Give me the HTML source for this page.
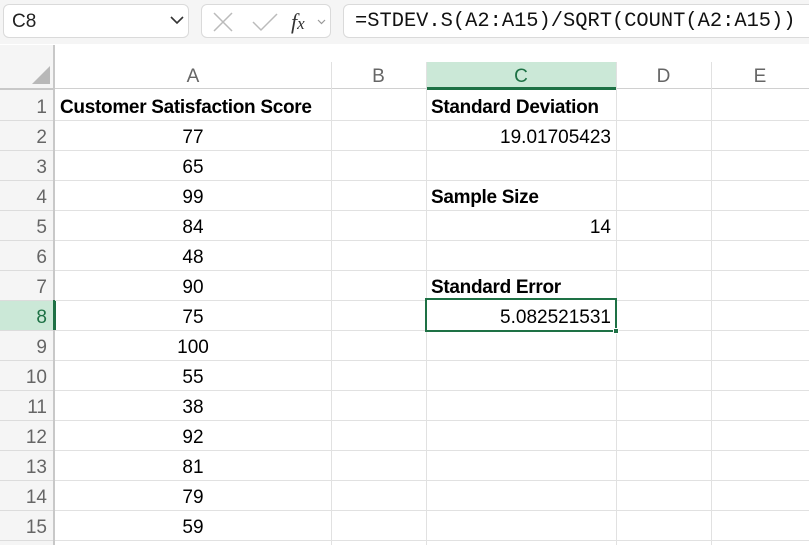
<!DOCTYPE html>
<html><head><style>
*{margin:0;padding:0;box-sizing:border-box}
body{width:809px;height:545px;overflow:hidden;background:#fff;font-family:"Liberation Sans",Arial,sans-serif;position:relative}
.a{position:absolute}
.bar{left:0;top:0;width:809px;height:44px;background:#f5f5f5}
.box{background:#fff;border:1px solid #dadada;border-radius:6px;height:34px;top:4px}
.t{position:absolute;font-size:19px;color:#000;line-height:30px;white-space:nowrap;margin-top:2px}
.b{font-weight:bold;letter-spacing:-0.3px}
.rh{position:absolute;left:0;width:53px;text-align:right;padding-right:6px;font-size:19px;color:#666;line-height:30px;margin-top:2px}
.hl{position:absolute;height:1px;background:#e1e1e1;left:55px;width:754px}
.vl{position:absolute;width:1px;background:#e1e1e1;top:62px;height:483px}
.ch{position:absolute;top:63px;height:27px;text-align:center;font-size:19px;color:#666;line-height:28px}
.n{left:55px;width:276px;text-align:center}
</style></head><body>
<div class="a bar"></div>
<div class="a box" style="left:3px;width:186px"></div>
<div class="t" style="left:12px;top:5px;font-size:19px;color:#222">C8</div>
<svg class="a" style="left:170px;top:16px" width="14" height="9"><path d="M1 1 L7 7 L13 1" fill="none" stroke="#333" stroke-width="1.6"/></svg>
<div class="a box" style="left:201px;width:130px"></div>
<svg class="a" style="left:213px;top:12px" width="20" height="20"><path d="M1 1L19 19M19 1L1 19" stroke="#bbb" stroke-width="1.5"/></svg>
<svg class="a" style="left:252px;top:12px" width="26" height="20"><path d="M1 10L9 18L25 2" fill="none" stroke="#bbb" stroke-width="1.5"/></svg>
<div class="t" style="left:291px;top:5px;font-family:'Liberation Serif',serif;font-style:italic;font-size:22px;color:#333">f<span style="font-size:17px">x</span></div>
<svg class="a" style="left:317px;top:19px" width="9" height="6"><path d="M1 1L4.5 4.5L8 1" fill="none" stroke="#999" stroke-width="1.2"/></svg>
<div class="a box" style="left:343px;width:480px"></div>
<div class="t" style="left:355px;top:5px;font-family:'Liberation Mono',monospace;font-size:20.4px;color:#111">=STDEV.S(A2:A15)/SQRT(COUNT(A2:A15))</div>

<div class="a" style="left:0;top:45px;width:55px;height:500px;background:#f5f5f5"></div>
<div class="a" style="left:53px;top:45px;width:2px;height:500px;background:#c8c8c8"></div>
<div class="a" style="left:0;top:88px;width:809px;height:1px;background:#d0d0d0"></div>
<div class="a" style="left:0;top:88px;width:55px;height:2px;background:#c8c8c8"></div>
<svg class="a" style="left:32px;top:66px" width="18" height="18"><path d="M18 0L18 18L0 18Z" fill="#b8b8b8"/></svg>

<div class="a" style="left:427px;top:62px;width:189px;height:27px;background:#cbe8d7"></div>
<div class="a" style="left:426px;top:87px;width:190px;height:3px;background:#1e7145"></div>
<div class="ch" style="left:55px;width:276px">A</div>
<div class="ch" style="left:331px;width:95px">B</div>
<div class="ch" style="left:426px;width:190px;color:#1e7145">C</div>
<div class="ch" style="left:616px;width:95px">D</div>
<div class="ch" style="left:711px;width:98px">E</div>

<div class="vl" style="left:331px"></div><div class="vl" style="left:426px"></div><div class="vl" style="left:616px"></div><div class="vl" style="left:711px"></div>

<div class="a" style="left:0;top:300px;width:53px;height:30px;background:#cbe8d7"></div>
<div class="a" style="left:53px;top:300px;width:3px;height:30px;background:#1e7145"></div>

<div class="hl" style="top:120px"></div><div class="hl" style="top:150px"></div><div class="hl" style="top:180px"></div><div class="hl" style="top:210px"></div><div class="hl" style="top:240px"></div><div class="hl" style="top:270px"></div><div class="hl" style="top:300px"></div><div class="hl" style="top:330px"></div><div class="hl" style="top:360px"></div><div class="hl" style="top:390px"></div><div class="hl" style="top:420px"></div><div class="hl" style="top:450px"></div><div class="hl" style="top:480px"></div><div class="hl" style="top:510px"></div><div class="hl" style="top:540px"></div>
<div class="a" style="left:0;top:120px;width:53px;height:1px;background:#dcdcdc;box-shadow:0 30px #dcdcdc,0 60px #dcdcdc,0 90px #dcdcdc,0 120px #dcdcdc,0 150px #dcdcdc,0 180px #dcdcdc,0 210px #dcdcdc,0 240px #dcdcdc,0 270px #dcdcdc,0 300px #dcdcdc,0 330px #dcdcdc,0 360px #dcdcdc,0 390px #dcdcdc,0 420px #dcdcdc"></div>

<div class="rh" style="top:91px">1</div>
<div class="rh" style="top:121px">2</div>
<div class="rh" style="top:151px">3</div>
<div class="rh" style="top:181px">4</div>
<div class="rh" style="top:211px">5</div>
<div class="rh" style="top:241px">6</div>
<div class="rh" style="top:271px">7</div>
<div class="rh" style="top:301px;color:#1e7145">8</div>
<div class="rh" style="top:331px">9</div>
<div class="rh" style="top:361px">10</div>
<div class="rh" style="top:391px">11</div>
<div class="rh" style="top:421px">12</div>
<div class="rh" style="top:451px">13</div>
<div class="rh" style="top:481px">14</div>
<div class="rh" style="top:511px">15</div>

<div class="t b" style="left:60px;top:91px">Customer Satisfaction Score</div>
<div class="t n" style="top:121px">77</div>
<div class="t n" style="top:151px">65</div>
<div class="t n" style="top:181px">99</div>
<div class="t n" style="top:211px">84</div>
<div class="t n" style="top:241px">48</div>
<div class="t n" style="top:271px">90</div>
<div class="t n" style="top:301px">75</div>
<div class="t n" style="top:331px">100</div>
<div class="t n" style="top:361px">55</div>
<div class="t n" style="top:391px">38</div>
<div class="t n" style="top:421px">92</div>
<div class="t n" style="top:451px">81</div>
<div class="t n" style="top:481px">79</div>
<div class="t n" style="top:511px">59</div>

<div class="t b" style="left:431px;top:91px">Standard Deviation</div>
<div class="t" style="left:426px;width:185px;text-align:right;top:121px">19.01705423</div>
<div class="t b" style="left:431px;top:181px">Sample Size</div>
<div class="t" style="left:426px;width:185px;text-align:right;top:211px">14</div>
<div class="t b" style="left:431px;top:271px">Standard Error</div>
<div class="a" style="left:425px;top:298px;width:192px;height:34px;border:2px solid #1e7145;background:#fff"></div>
<div class="t" style="left:426px;width:185px;text-align:right;top:301px">5.082521531</div>
<div class="a" style="left:613px;top:328px;width:6px;height:6px;background:#1e7145;border:1px solid #fff"></div>
</body></html>
